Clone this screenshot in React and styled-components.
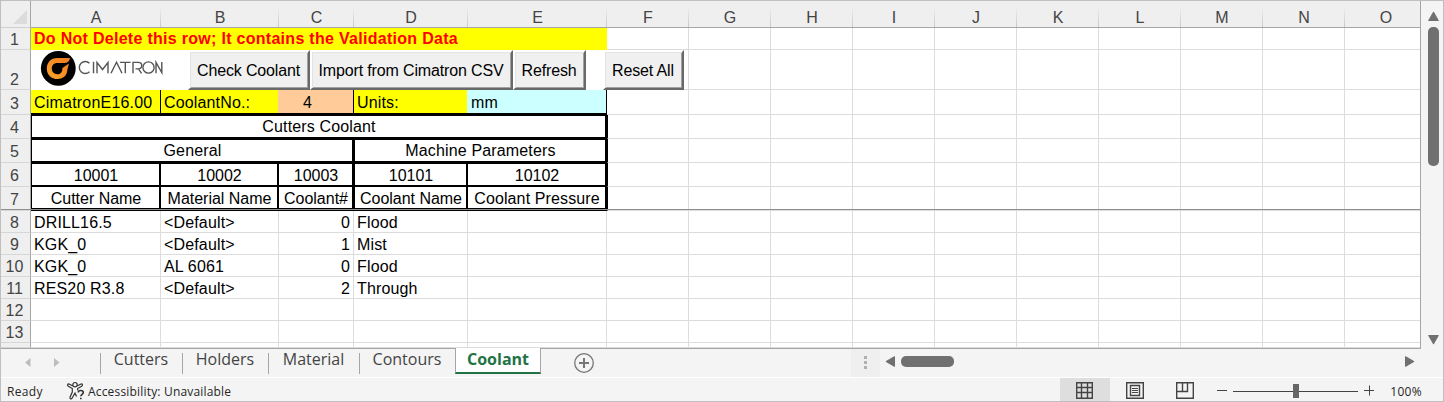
import React from "react";
import { styled, createGlobalStyle, css } from "styled-components";

const GlobalStyle = createGlobalStyle`
  * {
    box-sizing: border-box;
  }
  body {
    margin: 0;
    overflow: hidden;
  }
`;

const ui = `"Open Sans", "Noto Sans", sans-serif`;

const Window = styled.div`
  width: 1444px;
  height: 402px;
  display: flex;
  flex-direction: column;
  border: 1px solid #bfbfbf;
  background-color: #f4f4f4;
  font-family: "Liberation Sans", Arial, sans-serif;
  font-size: 16px;
  color: #000;
`;

const Main = styled.div`
  display: flex;
  height: 348px;
`;

const Sheet = styled.div`
  position: relative;
  width: 1420px;
  height: 348px;
  overflow: hidden;
  display: grid;
  grid-template-columns: 30px 130px 118px 75px 114px 139px repeat(10, 82px);
  grid-template-rows: 27px 22px 40px 25px 24px 24px 24px 24px repeat(6, 22px) 5px;
  background-color: #fff;
  border-right: 1px solid #a6a6a6;
  border-bottom: 1px solid #a6a6a6;
`;

const Corner = styled.div`
  display: flex;
  justify-content: flex-end;
  align-items: flex-end;
  padding: 0 3px 3px 0;
  background-color: #efefef;
  border-right: 1px solid #a6a6a6;
  border-bottom: 1px solid #d0d0d0;

  &::after {
    content: "";
    border-left: 14px solid transparent;
    border-bottom: 14px solid #dcdcdc;
  }
`;

const ColumnHead = styled.div`
  position: relative;
  display: flex;
  justify-content: center;
  align-items: flex-end;
  line-height: 18px;
  background-color: #efefef;
  border-bottom: 1px solid #a6a6a6;
  color: #444;

  &::after {
    content: "";
    position: absolute;
    right: 0;
    top: 6px;
    bottom: 0;
    width: 1px;
    background: linear-gradient(#efefef, #c8c8c8);
  }
`;

const RowHead = styled.div`
  display: flex;
  justify-content: center;
  align-items: flex-end;
  padding-right: 2px;
  line-height: ${(p) => (p.$low ? 19 : 21)}px;
  background-color: #efefef;
  border-right: 1px solid #a6a6a6;
  border-bottom: 1px solid #d6d6d6;
  color: #444;
`;

const frames = {
  label: css`
    border-color: #000;
    border-width: 0 ${(p) => (p.$line ? "1px" : "0")} 2px 0;
    margin-left: ${(p) => (p.$overlap ? "-1px" : "0")};
    padding-left: ${(p) => (p.$overlap ? "4px" : "3px")};
  `,
  title: css`
    border-color: #000;
    border-width: 1px 2px 2px ${(p) => (p.$first ? "1px" : "0")};
    padding-left: 4px;
  `,
  code: css`
    border-color: #000;
    border-width: 1px 2px 2px ${(p) => (p.$first ? "1px" : "0")};
    padding-left: 4px;
    line-height: 18px;
  `,
  name: css`
    border-color: #000;
    border-width: 0 2px 3px ${(p) => (p.$first ? "1px" : "0")};
    border-bottom-style: double;
    padding-left: 4px;
    line-height: 18px;
  `,
  record: css`
    line-height: 18px;
  `,
  edge: css`
    border-left: 1px solid #000;
  `,
};

const Cell = styled.div`
  grid-column: span ${(p) => p.$span || 1};
  display: flex;
  align-items: flex-end;
  justify-content: ${(p) => p.$align || "flex-start"};
  padding: 0 3px;
  overflow: hidden;
  white-space: nowrap;
  line-height: 20px;
  letter-spacing: ${(p) => p.$spacing || "0.15px"};
  background-color: ${(p) => p.$fill || "#fff"};
  border: 0 solid ${(p) => p.$fill || "#dcdcdc"};
  border-width: 0 1px 1px 0;
  ${(p) => p.$frame && frames[p.$frame]}
`;

const Warning = styled(Cell)`
  color: #f00;
  font-weight: bold;
  letter-spacing: 0.29px;
`;

const CoolantCount = styled(Cell)`
  padding-right: 20px;
`;

// Line under the frozen rows
const FreezeLine = styled.div`
  position: absolute;
  left: 0;
  top: 208px;
  width: 100%;
  height: 1px;
  background-color: #8f8f8f;
`;

const Logo = styled.svg`
  position: absolute;
  left: 39px;
  top: 49px;
`;

const SheetButtons = styled.div`
  position: absolute;
  left: 187px;
  top: 49px;
  display: flex;
`;

const SheetButton = styled.button`
  width: ${(p) => p.$width}px;
  height: 40px;
  margin: 0 0 0 ${(p) => p.$gap || 0}px;
  padding: 2px 1px 0 0;
  border: 2px solid #fff;
  border-right-color: #696969;
  border-bottom-color: #696969;
  box-shadow: inset 1px 1px #e3e3e3, inset -1px -1px #a0a0a0;
  background-color: #f0f0f0;
  color: #000;
  font-family: inherit;
  font-size: 16px;
  letter-spacing: -0.15px;
  white-space: nowrap;
`;

const VerticalScroll = styled.div`
  flex: 1;
  display: flex;
  flex-direction: column;
  align-items: center;
  padding: 10px 0 4px 2px;
`;

const VerticalThumb = styled.div`
  width: 11px;
  height: 139px;
  margin: 5px 0 auto;
  border-radius: 5px;
  background-color: #707070;
`;

const TabBar = styled.div`
  display: flex;
  height: 29px;
  padding-right: 23px;
  border-bottom: 1px solid #fff;
  font-family: ${ui};
`;

const TabArrows = styled.div`
  display: flex;
  width: 99px;
  padding: 9px 0 0 22px;
  gap: 20px;
`;

const Tab = styled.div`
  width: ${(p) => p.$width}px;
  height: 26px;
  text-align: center;
  line-height: 21px;
  font-size: 16px;
  color: #444;
  background: linear-gradient(#a6a6a6, #a6a6a6) 0 4px / 1px 21px no-repeat;
`;

const ActiveTab = styled(Tab)`
  z-index: 1;
  margin-top: -1px;
  line-height: 23px;
  border: 1px solid #a6a6a6;
  border-top: 0;
  border-bottom: 2px solid #217346;
  background: #fff;
  color: #217346;
  font-weight: bold;
`;

const AddSheet = styled.svg`
  margin: 4px 0 0 32px;
`;

const TabSplitter = styled.div`
  display: flex;
  flex-direction: column;
  align-items: center;
  gap: 2px;
  width: 29px;
  margin-left: auto;
  padding-top: 7px;
  background-color: #efefef;

  i {
    width: 3px;
    height: 3px;
    background-color: #b0b0b0;
  }
`;

const HorizontalScroll = styled.div`
  display: flex;
  align-items: flex-start;
  width: 540px;
  padding: 7px 5px 0 5px;
`;

const HorizontalThumb = styled.div`
  width: 53px;
  height: 11px;
  margin: 0 auto 0 5px;
  border-radius: 5px;
  background-color: #707070;
`;

const StatusBar = styled.div`
  display: flex;
  height: 23px;
  padding: 0 21px 0 6px;
  align-items: center;
  font-family: ${ui};
  font-size: 12px;
  line-height: 18px;
  color: #262626;
`;

const Ready = styled.span`
  width: 59px;
  padding-top: 4px;
  letter-spacing: 0.35px;
`;

const Access = styled.span`
  display: flex;
  align-items: center;
  gap: 2px;
  white-space: nowrap;
  letter-spacing: 0.18px;
`;

const StatusText = styled.span`
  padding-top: 4px;
`;

const Views = styled.div`
  display: flex;
  height: 23px;
  margin-left: auto;
`;

const View = styled.div`
  display: flex;
  justify-content: center;
  align-items: center;
  width: 50px;
  height: 23px;
  padding: 2px 1px 0 0;
  background-color: ${(p) => (p.$active ? "#dedede" : "transparent")};
`;

const Zoom = styled.div`
  display: flex;
  align-items: center;
  width: 212px;
  justify-content: space-between;
  padding-left: 7px;
  letter-spacing: 0.3px;
`;

const ZoomSlider = styled.svg`
  margin-top: 2px;
`;

const columns = "ABCDEFGHIJKLMNO".split("");

const records = [
  ["DRILL16.5", "<Default>", "0", "Flood"],
  ["KGK_0", "<Default>", "1", "Mist"],
  ["KGK_0", "AL 6061", "0", "Flood"],
  ["RES20 R3.8", "<Default>", "2", "Through"],
  ["", "", "", ""],
  ["", "", "", ""],
  ["", "", "", ""],
];

const tabs = [
  { name: "Cutters", width: 82 },
  { name: "Holders", width: 86 },
  { name: "Material", width: 91 },
  { name: "Contours", width: 96 },
];

function Blanks({ count = 10, edge }) {
  return Array.from({ length: count }, (_, i) => (
    <Cell key={i} $frame={edge && i === 0 ? "edge" : undefined} />
  ));
}

function Arrow({ direction, size = 11 }) {
  const turn = { up: 0, right: 90, down: 180, left: 270 }[direction];
  return (
    <svg width={size} height={size} viewBox="0 0 10 10">
      <path
        d="M5 1.2 9.3 8.6H.7Z"
        fill="#707070"
        stroke="#707070"
        strokeLinejoin="round"
        transform={`rotate(${turn} 5 5)`}
      />
    </svg>
  );
}

function TabArrow({ flip }) {
  return (
    <svg width="9" height="9" viewBox="0 0 9 9">
      <path d={flip ? "M2 0 7.5 4.5 2 9Z" : "M7.5 0 2 4.5 7.5 9Z"} fill="#bdbdbd" />
    </svg>
  );
}

function CimatronLogo() {
  return (
    <Logo width="126" height="38" viewBox="0 0 126 38">
      <defs>
        <linearGradient id="flame" x1="0" y1="1" x2="1" y2="0">
          <stop offset="0" stopColor="#f9a52b" />
          <stop offset="1" stopColor="#f07a22" />
        </linearGradient>
      </defs>
      <circle cx="18.3" cy="18.3" r="17.4" fill="#000" />
      <path
        d="M30 8H17.5C10.5 8 6.8 12.8 6.8 18.4 6.8 25 11.5 29 17.5 29 23.8 29 27.4 24.5 27.4 19.500L29 13.5 22.4 18C22.4 22 20.7 24.300 17.5 24.3 14 24.3 11.8 21.8 11.8 18.6 11.8 15.3 14 13.1 17.2 13.1H24.5C27.5 13.1 29.500 11.5 30 8Z"
        fill="url(#flame)"
      />
      <g fill="none" stroke="#555" strokeWidth="1.4">
        <path d="M49.5 13.2A6 6 0 1 0 49.5 21.8" />
        <path d="M53.5 11.8V23.3" />
        <path d="M57 23.3V12.5L62.5 19.5 68 12.5V23.3" />
        <path d="M71 23.3 76.5 12.3 82 23.3" />
        <path d="M80 12.4H90.5M85.3 12.4V23.3" />
        <path d="M93 23.3V12.4H98.5A3.2 3.2 0 0 1 98.5 18.9H95.5M98.5 18.9 101.5 23.3" />
        <circle cx="108.5" cy="17.5" r="5.6" />
        <path d="M116 23.3V12.3L121.8 22.5V12" />
      </g>
    </Logo>
  );
}

function App() {
  return (
    <>
      <GlobalStyle />
      <Window>
        <Main>
          <Sheet>
            <Corner />
            {columns.map((column) => (
              <ColumnHead key={column}>{column}</ColumnHead>
            ))}

            <RowHead $low>1</RowHead>
            <Warning $span={5} $fill="#ff0">
              Do Not Delete this row; It contains the Validation Data
            </Warning>
            <Blanks />

            <RowHead $low>2</RowHead>
            <Cell $span={5} $fill="#fff" />
            <Blanks />

            <RowHead>3</RowHead>
            <Cell $fill="#ff0" $frame="label" $line $spacing="0.2px">
              CimatronE16.00
            </Cell>
            <Cell $fill="#ff0" $frame="label">
              CoolantNo.:
            </Cell>
            <CoolantCount $fill="#fc9" $frame="label" $line $overlap $align="center">
              4
            </CoolantCount>
            <Cell $fill="#ff0" $frame="label">
              Units:
            </Cell>
            <Cell $fill="#cff" $frame="label" $line $overlap>
              mm
            </Cell>
            <Blanks />

            <RowHead>4</RowHead>
            <Cell $span={5} $align="center" $frame="title" $first>
              Cutters Coolant
            </Cell>
            <Blanks edge />

            <RowHead>5</RowHead>
            <Cell $span={3} $align="center" $frame="title" $first>
              General
            </Cell>
            <Cell $span={2} $align="center" $frame="title" $first>
              Machine Parameters
            </Cell>
            <Blanks edge />

            <RowHead>6</RowHead>
            {["10001", "10002", "10003", "10101", "10102"].map((code, i) => (
              <Cell
                key={code}
                $align="center"
                $spacing="0"
                $frame="code"
                $first={i === 0 || i === 3}
              >
                {code}
              </Cell>
            ))}
            <Blanks edge />

            <RowHead>7</RowHead>
            {[
              "Cutter Name",
              "Material Name",
              "Coolant#",
              "Coolant Name",
              "Coolant Pressure",
            ].map((name, i) => (
              <Cell
                key={name}
                $align="center"
                $spacing={i === 4 ? "0.12px" : "-0.02px"}
                $frame="name"
                $first={i === 0 || i === 3}
              >
                {name}
              </Cell>
            ))}
            <Blanks edge />

            {records.map((record, i) => (
              <React.Fragment key={i}>
                <RowHead $low>{i < 6 ? i + 8 : ""}</RowHead>
                {record.map((value, j) => (
                  <Cell
                    key={j}
                    $frame="record"
                    $align={j === 2 ? "flex-end" : "flex-start"}
                  >
                    {value}
                  </Cell>
                ))}
                <Blanks count={11} />
              </React.Fragment>
            ))}

            <FreezeLine />
            <CimatronLogo />
            <SheetButtons>
              <SheetButton $width={122}>Check Coolant</SheetButton>
              <SheetButton $width={203}>Import from Cimatron CSV</SheetButton>
              <SheetButton $width={73}>Refresh</SheetButton>
              <SheetButton $width={81} $gap={17}>
                Reset All
              </SheetButton>
            </SheetButtons>
          </Sheet>
          <VerticalScroll>
            <Arrow direction="up" />
            <VerticalThumb />
            <Arrow direction="down" />
          </VerticalScroll>
        </Main>

        <TabBar>
          <TabArrows>
            <TabArrow />
            <TabArrow flip />
          </TabArrows>
          {tabs.map((tab) => (
            <Tab key={tab.name} $width={tab.width}>
              {tab.name}
            </Tab>
          ))}
          <ActiveTab $width={86}>Coolant</ActiveTab>
          <AddSheet width="21" height="21" viewBox="0 0 21 21" fill="none">
            <circle cx="11" cy="10" r="9.3" stroke="#767676" strokeWidth="1.3" />
            <path d="M11 5V15M6 10H16" stroke="#767676" strokeWidth="2" />
          </AddSheet>
          <TabSplitter>
            <i />
            <i />
            <i />
          </TabSplitter>
          <HorizontalScroll>
            <Arrow direction="left" />
            <HorizontalThumb />
            <Arrow direction="right" />
          </HorizontalScroll>
        </TabBar>

        <StatusBar>
          <Ready>Ready</Ready>
          <Access>
            <svg width="20" height="20" viewBox="0 0 20 20" fill="none" stroke="#333" strokeWidth="1.2">
              <circle cx="9" cy="4.7" r="2.2" />
              <path d="M7 6 3 4C1.500 3.700 1 5.500 2.300 6.200L6.300 8.500V12L4 17.200C3.700 19 5.400 19.400 6 18.200L9 13 10.500 16.500M11 6 15 4C16.500 3.700 17 5.500 15.700 6.200L11.700 8.500V10.500" />
              <path d="M12.300 12.500C12.300 9.800 17.300 9.800 17.300 12.500 17.300 14.300 14.800 14.300 14.800 16.300M14.800 17.700V19.200" strokeWidth="1.6" />
            </svg>
            <StatusText>Accessibility: Unavailable</StatusText>
          </Access>
          <Views>
            <View $active>
              <svg width="17" height="17" viewBox="0 0 17 17" fill="none" stroke="#444" strokeWidth="1.4">
                <path d="M.7.7H16.3V16.3H.7ZM.5 5.5H16.5M.5 10.5H16.5M5.5.5V16.5M11.5.5V16.5" />
              </svg>
            </View>
            <View>
              <svg width="18" height="17" viewBox="0 0 18 17" fill="none" stroke="#444" strokeWidth="1.4">
                <path d="M.7.7H17.3V16.3H.7ZM4.5 3.5H13.5V13.5H4.5Z" />
                <path d="M6 6.5H12M6 8.5H12M6 10.5H12" strokeWidth="1" />
              </svg>
            </View>
            <View>
              <svg width="18" height="17" viewBox="0 0 18 17" fill="none" stroke="#444" strokeWidth="1.4">
                <path d="M.7.7H17.3V16.3H.7ZM1 9.5H11.5V1M6.5 1V9" />
              </svg>
            </View>
          </Views>
          <Zoom>
            <ZoomSlider width="160" height="15" viewBox="0 0 160 15" fill="none" stroke="#444">
              <path d="M0 7.5H10M16 8.5H141M147 7.5H157M152.5 2.5V12.5" />
              <path d="M76 1H82V15H76Z" fill="#666" stroke="none" />
            </ZoomSlider>
            <StatusText>100%</StatusText>
          </Zoom>
        </StatusBar>
      </Window>
    </>
  );
}

export default App;
